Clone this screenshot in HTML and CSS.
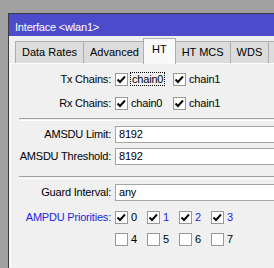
FILE: index.html
```html
<!DOCTYPE html>
<html lang="en">
<head>
    <meta charset="UTF-8">
    <title>Interface &lt;wlan1&gt;</title>
    <link rel="stylesheet" href="styles.css">
</head>
<body>
    <div class="window">
        <div class="titlebar">Interface &lt;wlan1&gt;</div>
        <div class="tabs">
            <div class="tab">Data Rates</div>
            <div class="tab">Advanced</div>
            <div class="tab active">HT</div>
            <div class="tab">HT MCS</div>
            <div class="tab">WDS</div>
            <div class="tab more"></div>
        </div>
        <div class="panel">
            <div class="row check-row">
                <div class="lbl">Tx Chains:</div>
                <div class="item wide"><span class="cb on"><svg viewBox="0 0 11 11"><path d="M1.5 5.5 L4 8 L9 2.5"/></svg></span><span class="txt focus">chain0</span></div>
                <div class="item wide"><span class="cb on"><svg viewBox="0 0 11 11"><path d="M1.5 5.5 L4 8 L9 2.5"/></svg></span><span class="txt">chain1</span></div>
            </div>
            <div class="row check-row">
                <div class="lbl">Rx Chains:</div>
                <div class="item wide"><span class="cb on"><svg viewBox="0 0 11 11"><path d="M1.5 5.5 L4 8 L9 2.5"/></svg></span><span class="txt">chain0</span></div>
                <div class="item wide"><span class="cb on"><svg viewBox="0 0 11 11"><path d="M1.5 5.5 L4 8 L9 2.5"/></svg></span><span class="txt">chain1</span></div>
            </div>
            <div class="sep first"></div>
            <div class="row field-row">
                <div class="lbl">AMSDU Limit:</div>
                <div class="field">8192</div>
            </div>
            <div class="row field-row">
                <div class="lbl">AMSDU Threshold:</div>
                <div class="field">8192</div>
            </div>
            <div class="sep"></div>
            <div class="row field-row">
                <div class="lbl">Guard Interval:</div>
                <div class="field">any</div>
            </div>
            <div class="row prio-row">
                <div class="lbl blue">AMPDU Priorities:</div>
                <div class="item"><span class="cb on"><svg viewBox="0 0 11 11"><path d="M1.5 5.5 L4 8 L9 2.5"/></svg></span><span class="txt">0</span></div>
                <div class="item"><span class="cb on"><svg viewBox="0 0 11 11"><path d="M1.5 5.5 L4 8 L9 2.5"/></svg></span><span class="txt blue">1</span></div>
                <div class="item"><span class="cb on"><svg viewBox="0 0 11 11"><path d="M1.5 5.5 L4 8 L9 2.5"/></svg></span><span class="txt blue">2</span></div>
                <div class="item"><span class="cb on"><svg viewBox="0 0 11 11"><path d="M1.5 5.5 L4 8 L9 2.5"/></svg></span><span class="txt blue">3</span></div>
            </div>
            <div class="row prio-row">
                <div class="lbl"></div>
                <div class="item"><span class="cb"></span><span class="txt">4</span></div>
                <div class="item"><span class="cb"></span><span class="txt">5</span></div>
                <div class="item"><span class="cb"></span><span class="txt">6</span></div>
                <div class="item"><span class="cb"></span><span class="txt">7</span></div>
            </div>
        </div>
    </div>
</body>
</html>
```

FILE: styles.css
```css
body { margin: 0; background: #a0a0a0; overflow: hidden; font-family: "Liberation Sans", Arial, sans-serif; font-size: 11px; letter-spacing: -0.2px; color: #000; }
.window { margin: 13px 0 0 8px; width: 320px; height: 260px; border-top: 1px solid #3c3c3c; border-left: 1px solid #3c3c3c; background: #f0f0f0; }
.titlebar { height: 18px; line-height: 18px; padding: 4px 0 0 6px; background: #4b4bcb; color: #fff; font-size: 11px; white-space: nowrap; }
.tabs { display: flex; align-items: flex-end; height: 27px; padding-left: 6px; }
.tab { height: 21px; line-height: 21px; padding: 0 6px; margin-right: -1px; border: 1px solid #adadad; border-bottom: none; background: #dcdcdc; white-space: nowrap; letter-spacing: 0; }
.tab.active { position: relative; z-index: 1; height: 25px; line-height: 21px; padding: 0 8px; margin: 0 -1px -1px -2px; background: #f9f9f9; }
.tab.more { width: 30px; }
.panel { margin-left: 1px; padding: 3px 0 0 8px; height: 200px; border-top: 1px solid #fff; border-left: 1px solid #fff; }
.row { display: flex; align-items: center; }
.check-row { height: 24px; }
.field-row { height: 22px; align-items: flex-start; }
.prio-row { height: 22px; }
.lbl { width: 92px; margin-right: 4px; text-align: right; white-space: nowrap; flex: none; }
.field-row .lbl { line-height: 17px; }
.blue { color: #1e1ee6; }
.item { display: flex; align-items: center; width: 32px; flex: none; }
.item.wide { width: 58px; }
.cb { display: flex; align-items: center; justify-content: center; width: 11px; height: 11px; border: 1px solid #999; background: #fff; flex: none; }
.cb svg { width: 11px; height: 11px; fill: none; stroke: #000; stroke-width: 1.9; }
.txt { margin-left: 3px; white-space: nowrap; }
.txt.focus { margin-left: 2px; padding: 0 1px; border: 1px dotted #000; line-height: 12px; }
.field { flex: 1; height: 15px; line-height: 15px; padding-left: 3px; border: 1px solid #a5a5a5; background: #fff; }
.sep { height: 1px; margin: 6px 0 5px; border-top: 1px solid #a0a0a0; border-bottom: 1px solid #fff; }
.sep.first { margin-top: 3px; }
```
